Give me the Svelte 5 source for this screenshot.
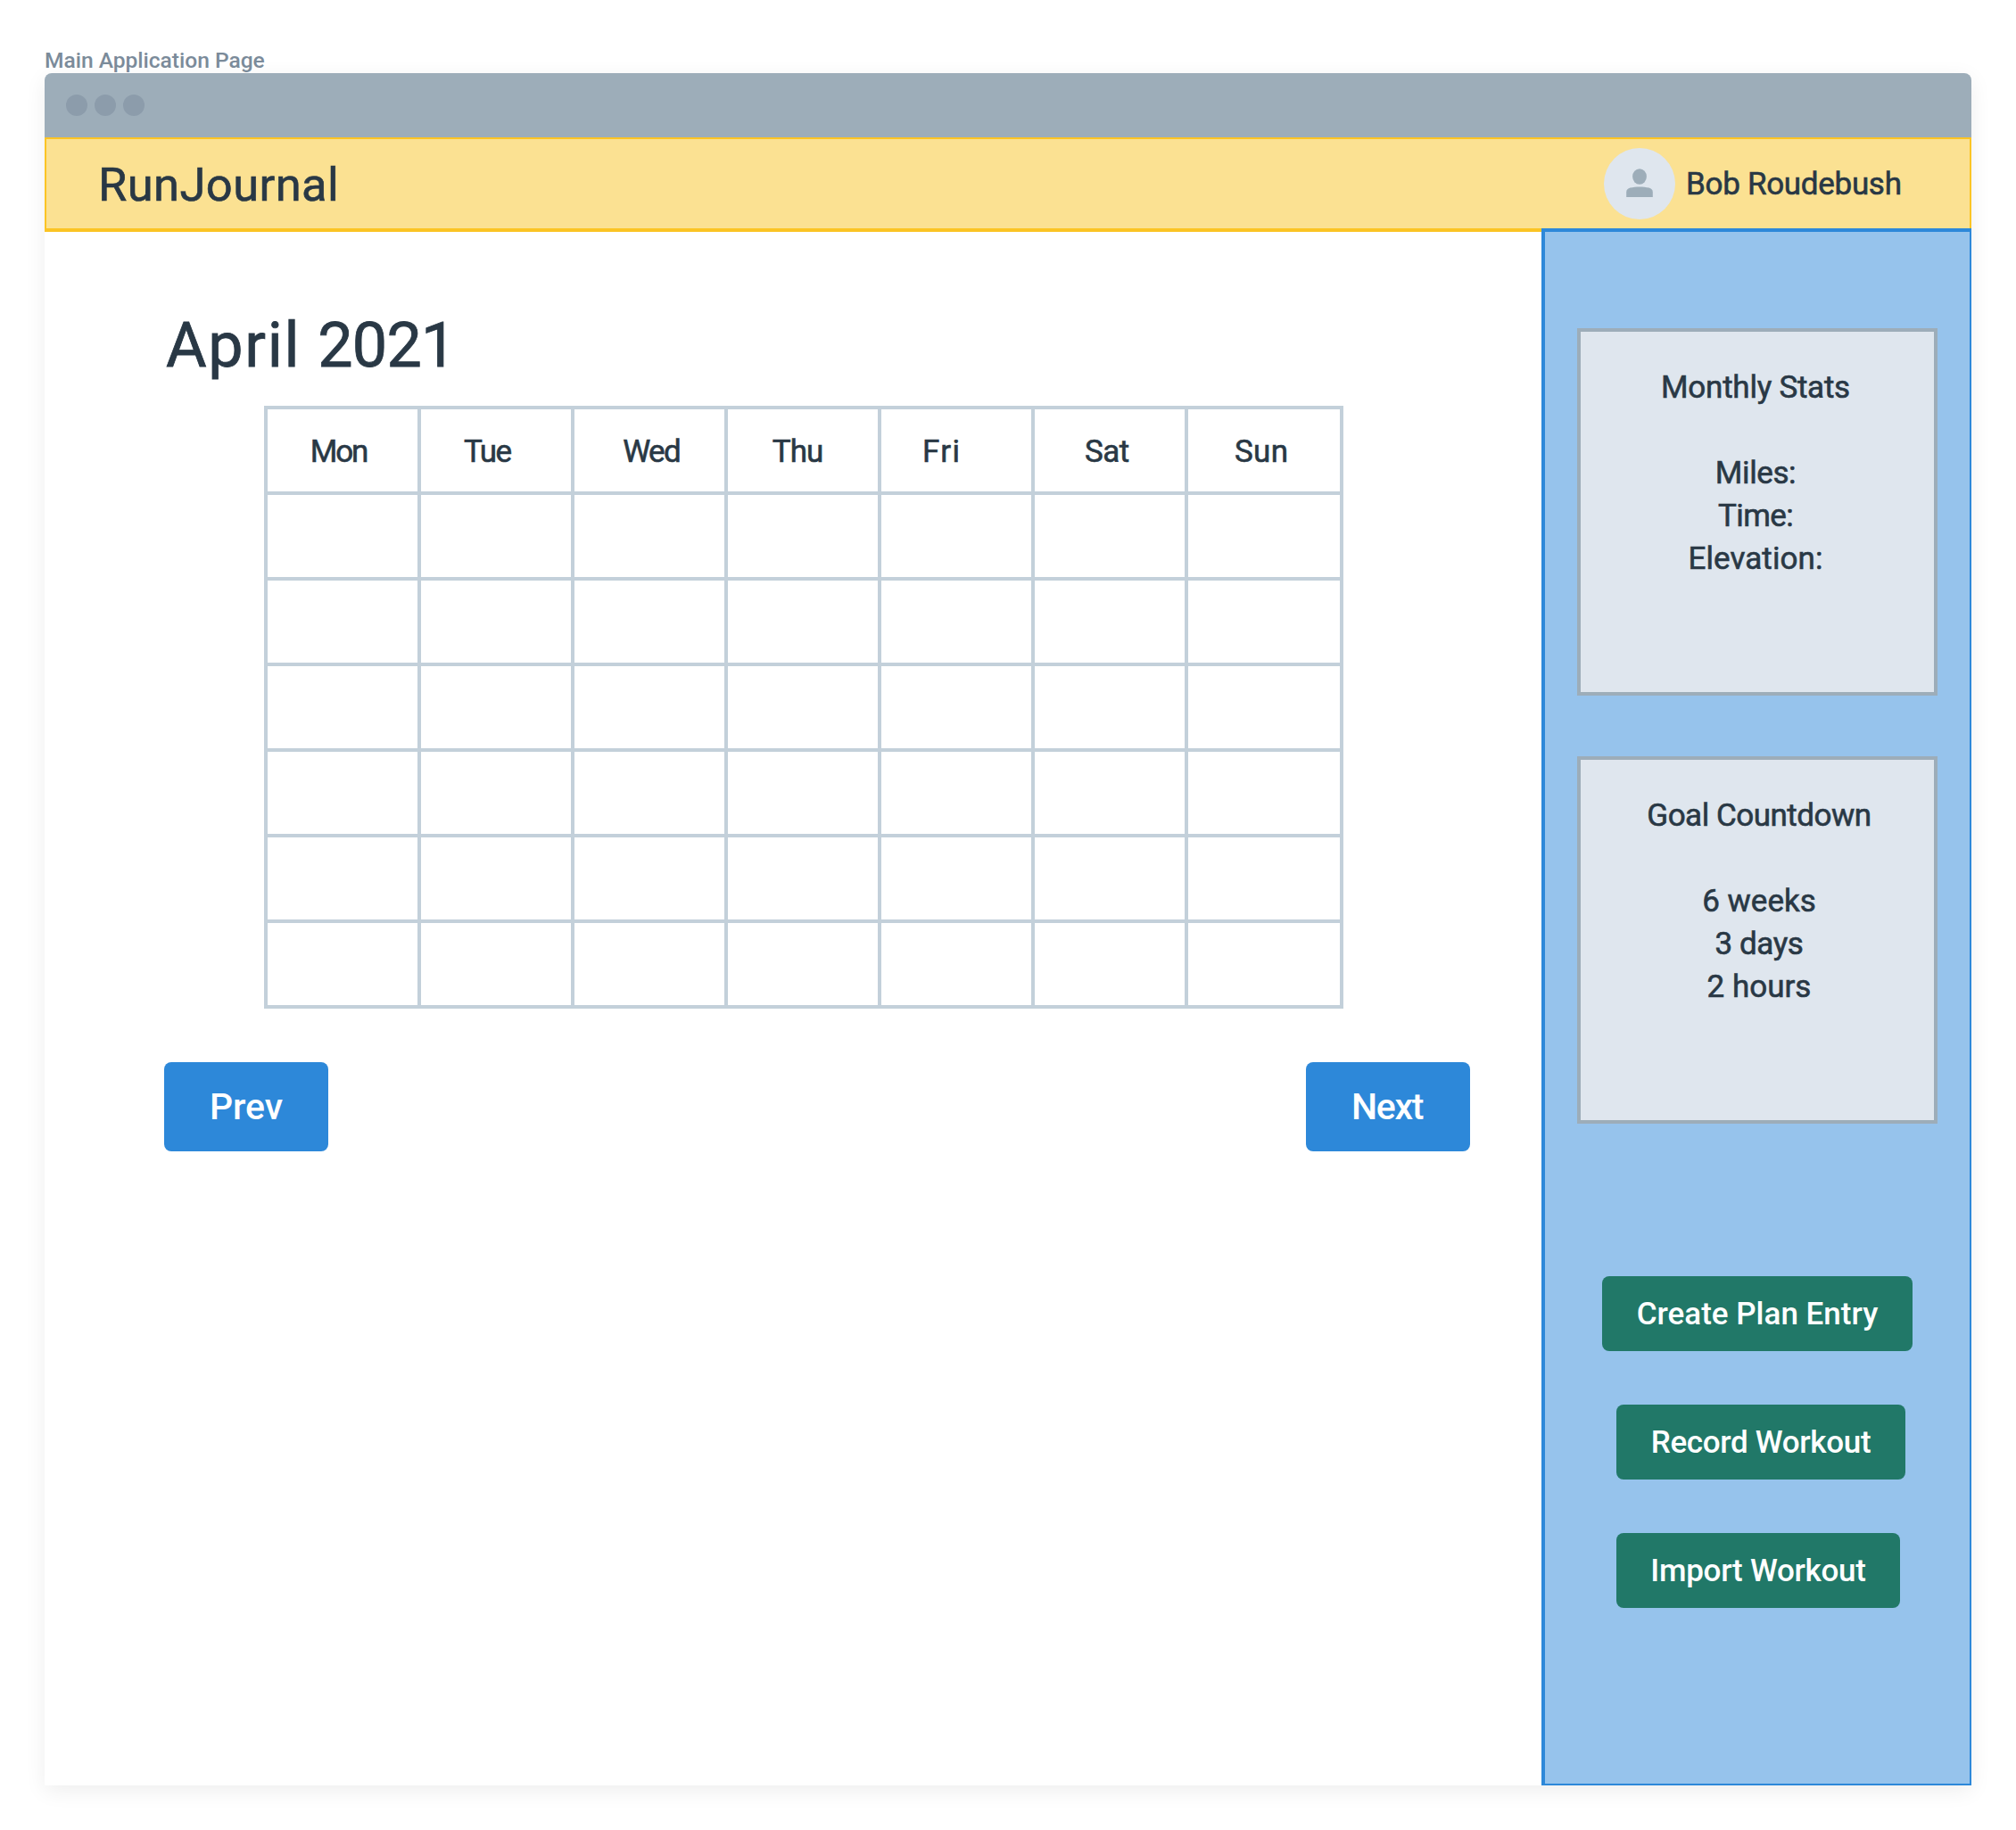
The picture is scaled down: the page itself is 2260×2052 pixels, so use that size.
<script>
  // indent: distance from the cell's left edge; tracking: letter spacing (both px)
  const days = [
    { name: 'Mon', indent: 47.8, tracking: -2.2 },
    { name: 'Tue', indent: 48, tracking: -1.5 },
    { name: 'Wed', indent: 54.2, tracking: -1.6 },
    { name: 'Thu', indent: 49.8, tracking: -1 },
    { name: 'Fri', indent: 46, tracking: 1.4 },
    { name: 'Sat', indent: 56, tracking: -0.5 },
    { name: 'Sun', indent: 52, tracking: 0.3 }
  ];
  const weeks = [1, 2, 3, 4, 5, 6];

  const stats = [
    { text: 'Miles:', tracking: -0.4 },
    { text: 'Time:', tracking: -0.6 },
    { text: 'Elevation:', tracking: 0.1 }
  ];
  const countdown = [
    { text: '6 weeks', tracking: 0 },
    { text: '3 days', tracking: -0.4 },
    { text: '2 hours', tracking: 0 }
  ];
</script>

<div class="page">
  <div class="caption">Main Application Page</div>

  <div class="window">
    <div class="titlebar"><i></i><i></i><i></i></div>

    <header>
      <h1>RunJournal</h1>
      <div class="user">
        <svg class="avatar" viewBox="0 0 80 80" aria-hidden="true">
          <circle cx="40" cy="40" r="40" fill="#dfe6ee" />
          <ellipse cx="40" cy="32" rx="7.9" ry="8.8" fill="#9dadb9" />
          <path d="M25.2 55V49.5C25.2 46.6 27 45.2 29.5 44.5C35.5 43 44.5 43 50.5 44.5C53 45.2 54.8 46.6 54.8 49.5V55Z" fill="#9dadb9" />
        </svg>
        <span>Bob Roudebush</span>
      </div>
    </header>

    <div class="body">
      <main>
        <h2>April <span>2021</span></h2>

        <div class="calendar">
          {#each days as day}
            <div class="cell day" style="padding-left: {day.indent}px; letter-spacing: {day.tracking}px">{day.name}</div>
          {/each}
          {#each weeks as week}
            {#each days as day}
              <div class="cell"></div>
            {/each}
          {/each}
        </div>

        <div class="pager">
          <button class="prev">Prev</button>
          <button class="next">Next</button>
        </div>
      </main>

      <aside>
        <section class="card stats">
          <h3>Monthly Stats</h3>
          {#each stats as line}
            <p style="letter-spacing: {line.tracking}px">{line.text}</p>
          {/each}
        </section>

        <section class="card goal">
          <h3>Goal Countdown</h3>
          {#each countdown as line}
            <p style="letter-spacing: {line.tracking}px">{line.text}</p>
          {/each}
        </section>

        <div class="actions">
          <button class="create">Create Plan Entry</button>
          <button class="record">Record Workout</button>
          <button class="import">Import Workout</button>
        </div>
      </aside>
    </div>
  </div>
</div>

<style>
  :global(body) {
    margin: 0;
    background: #fff;
  }

  .page {
    box-sizing: border-box;
    width: 2260px;
    height: 2052px;
    padding: 55px 50px 50px;
    overflow: hidden;
    font-family: Roboto, 'Liberation Sans', sans-serif;
    font-size: 35px;
    line-height: 48px;
    color: #293845;
    -webkit-text-stroke: 0.6px currentColor;
  }

  .caption {
    height: 27px;
    font-size: 24.6px;
    line-height: 25px;
    font-weight: 500;
    letter-spacing: -0.03px;
    color: #7b8b9a;
    -webkit-text-stroke: 0;
  }

  .window {
    display: flex;
    flex-direction: column;
    height: 1920px;
    background: #fff;
    border-radius: 8px 8px 0 0;
    box-shadow: 0 6px 24px rgba(0, 0, 0, 0.07);
  }

  .titlebar {
    display: flex;
    align-items: center;
    gap: 8px;
    height: 72px;
    padding-left: 24px;
    background: #9dadb9;
    border-radius: 8px 8px 0 0;
  }

  .titlebar i {
    width: 24px;
    height: 24px;
    border-radius: 50%;
    background: #8c9cab;
  }

  header {
    box-sizing: border-box;
    display: flex;
    align-items: center;
    justify-content: space-between;
    height: 106px;
    padding-left: 58px;
    background: #fbe192;
    border: 2px solid #fbc424;
    border-bottom-width: 4px;
  }

  h1,
  h2,
  h3,
  p {
    margin: 0;
    font-weight: 400;
  }

  h1 {
    padding-top: 2px;
    font-size: 52.5px;
    line-height: 60px;
    letter-spacing: 0.4px;
  }

  .user {
    display: flex;
    align-items: center;
    gap: 12px;
    width: 410px;
    letter-spacing: -0.3px;
  }

  .user span {
    padding-top: 2px;
  }

  .avatar {
    width: 80px;
    height: 80px;
    flex: none;
  }

  .body {
    display: grid;
    grid-template-columns: 1678px 482px;
    flex: 1;
  }

  main {
    padding: 87px 80px 0 134px;
  }

  h2 {
    padding-left: 2px;
    font-size: 70px;
    line-height: 80px;
    letter-spacing: 1.7px;
    -webkit-text-stroke: 0.8px currentColor;
  }

  h2 span {
    letter-spacing: -0.8px;
  }

  .calendar {
    box-sizing: border-box;
    display: grid;
    grid-template-columns: repeat(6, 172px) 174px;
    grid-auto-rows: 96px;
    width: 1210px;
    margin: 28px 0 0 112px;
    border: solid #c3d0da;
    border-width: 4px 0 0 4px;
  }

  .cell {
    box-sizing: border-box;
    border: solid #c3d0da;
    border-width: 0 4px 4px 0;
  }

  .day {
    padding-top: 2px;
    line-height: 92px;
  }

  button {
    padding: 0;
    border: 0;
    border-radius: 8px;
    color: #fff;
    font-family: inherit;
    font-weight: 500;
    -webkit-text-stroke: 0;
  }

  .pager {
    display: flex;
    justify-content: space-between;
    margin-top: 60px;
  }

  .pager button {
    width: 184px;
    height: 100px;
    font-size: 41px;
    background: #2d88d9;
  }

  .prev {
    letter-spacing: -0.1px;
  }

  .pager .next {
    padding-right: 2px;
    letter-spacing: -1.3px;
  }

  aside {
    box-sizing: border-box;
    display: flex;
    flex-direction: column;
    margin-top: -4px;
    padding: 108px 0 0 36px;
    background: #96c3ec;
    border: solid #2d88d9;
    border-width: 4px 2px 2px 4px;
  }

  .card {
    box-sizing: border-box;
    width: 404px;
    height: 412px;
    padding-top: 39px;
    background: #dfe6ee;
    border: 4px solid #9dadb9;
    text-align: center;
  }

  .card h3 {
    margin-bottom: 48px;
    font-size: 35px;
  }

  .stats {
    padding-right: 4px;
  }

  .stats h3 {
    letter-spacing: -0.25px;
  }

  .goal {
    margin-top: 68px;
    padding-left: 4px;
  }

  .goal h3 {
    letter-spacing: -0.48px;
  }

  .actions {
    display: flex;
    flex-direction: column;
    align-items: flex-start;
    gap: 60px;
    margin: 171px 0 0 28px;
  }

  .actions button {
    height: 84px;
    font-size: 35px;
    background: #217868;
  }

  .actions .create {
    width: 348px;
  }

  .actions .record {
    width: 324px;
    margin-left: 16px;
    letter-spacing: -0.33px;
  }

  .actions .import {
    width: 318px;
    margin-left: 16px;
    letter-spacing: -0.28px;
  }
</style>
